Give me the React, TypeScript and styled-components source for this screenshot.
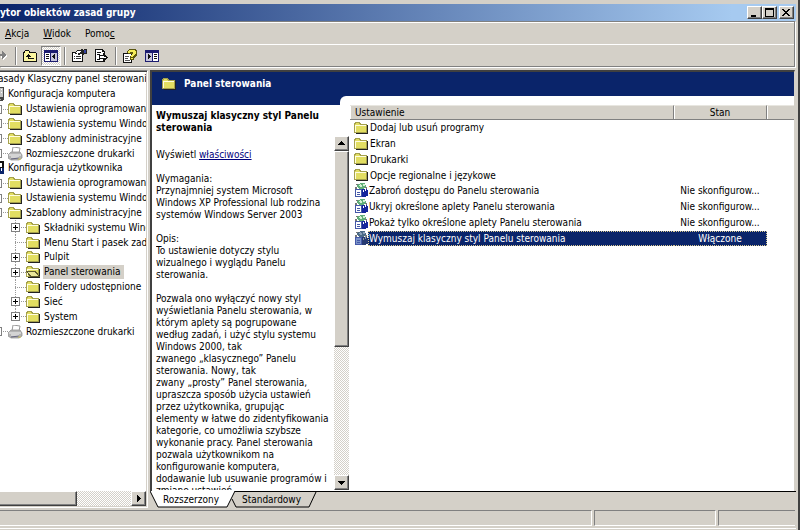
import React from "react";
import styled, { createGlobalStyle, css } from "styled-components";

const FACE = "#d4d0c8";
const NAVY = "#0a246a";
const SHADOW = "#808080";
const DARK = "#404040";

const GlobalStyle = createGlobalStyle`
  * { box-sizing: border-box; }
  body { margin: 0; background: ${FACE}; }
  body, button { font-family: "DejaVu Sans Condensed", "DejaVu Sans", sans-serif; font-size: 10px; line-height: 12px; color: #000; }
  button { padding: 0; border: 0; background: none; }
  svg { display: block; flex: none; }
`;

const raised = css`
  background: ${FACE};
  border: 1px solid;
  border-color: #fff ${DARK} ${DARK} #fff;
  box-shadow: inset -1px -1px ${SHADOW};
`;

const Window = styled.main`
  display: flex;
  flex-direction: column;
  height: 100vh;
  overflow: hidden;
  padding: 4px 2px 0 0;
  background: ${FACE};
  border-right: 2px solid ${DARK};
  white-space: nowrap;
`;

const TitleBar = styled.header`
  display: flex;
  align-items: center;
  height: 17px;
  flex: none;
  padding-right: 2px;
  background: linear-gradient(90deg, ${NAVY}, #a6caf0 92%);
`;

const Title = styled.h1`
  flex: 1;
  margin: 0;
  font-size: 10px;
  line-height: 17px;
  color: #fff;
`;

const CaptionButton = styled.button<{ $apart?: boolean }>`
  ${raised}
  display: grid;
  place-items: center;
  width: 15px;
  height: 13px;
  margin-left: ${(p) => (p.$apart ? 2 : 0)}px;
`;

const Bars = styled.div`
  flex: none;
  border-top: 1px solid ${SHADOW};
  border-right: 1px solid ${SHADOW};
  border-bottom: 1px solid ${SHADOW};
  box-shadow: inset 0 1px #fff, 1px 1px #fff;
  margin: 0 1px 3px 0;
`;

const MenuBar = styled.nav`
  display: flex;
  align-items: center;
  gap: 14px;
  height: 23px;
  padding: 1px 0 0 5px;
  border-bottom: 1px solid #fff;
`;

const Toolbar = styled.div`
  display: flex;
  align-items: center;
  height: 21px;
`;

const ToolButton = styled.button<{ $pressed?: boolean; $narrow?: boolean }>`
  display: grid;
  place-items: center;
  justify-content: ${(p) => (p.$narrow ? "start" : "center")};
  width: ${(p) => (p.$narrow ? 12 : 22)}px;
  height: 20px;
  ${(p) =>
    p.$pressed &&
    css`
      width: 20px;
      background: repeating-conic-gradient(#fff 0 25%, ${FACE} 0 50%) 0 0 / 2px 2px;
      border: 1px solid;
      border-color: ${SHADOW} #fff #fff ${SHADOW};
    `}
`;

const ToolSeparator = styled.span`
  width: 2px;
  height: 18px;
  margin: 0 2px 0 3px;
  border-left: 1px solid ${SHADOW};
  border-right: 1px solid #fff;
`;

const Panes = styled.div`
  display: flex;
  flex: 1;
  min-height: 0;
  gap: 2px;
`;

const TreePane = styled.nav`
  display: flex;
  flex-direction: column;
  width: 148px;
  flex: none;
  overflow: hidden;
  border-top: 1px solid ${SHADOW};
  border-right: 1px solid #fff;
  border-bottom: 1px solid #fff;
  box-shadow: inset 0 1px ${DARK}, inset -1px -1px ${FACE};
  padding: 1px 1px 1px 0;
  background: #fff;
`;

const Tree = styled.ul`
  display: grid;
  grid-template-rows: repeat(18, 1fr);
  height: 267px;
  margin: 0;
  padding: 0;
  overflow: hidden;
  list-style: none;
`;

const TreeRow = styled.li<{ $level: number }>`
  display: flex;
  align-items: center;
  min-height: 0;
  margin-left: ${(p) => (p.$level === 0 ? -2 : p.$level * 18 - 43)}px;
`;

const Branch = styled.span<{ $last?: boolean; $line: boolean }>`
  display: flex;
  align-items: center;
  flex: none;
  align-self: stretch;
  width: 15px;
  background-repeat: no-repeat;
  background-image: ${(p) =>
    p.$line
      ? `repeating-linear-gradient(90deg, #999 0 1px, transparent 1px 2px), repeating-linear-gradient(#999 0 1px, transparent 1px 2px)`
      : "none"};
  background-size: 11px 1px, 1px ${(p) => (p.$last ? "50%" : "100%")};
  background-position: 4px 50%, 4px 0;
`;

const Expander = styled.button`
  width: 9px;
  height: 9px;
  border: 1px solid ${SHADOW};
  background: #fff;
`;

const NodeLabel = styled.span<{ $selected?: boolean }>`
  padding: 0 4px 0 1px;
  margin-left: 2px;
  line-height: 14px;
  background: ${(p) => (p.$selected ? FACE : "transparent")};
`;

const HScroll = styled.div`
  display: flex;
  height: 15px;
  margin-top: auto;
  background: repeating-conic-gradient(#fff 0 25%, ${FACE} 0 50%) 0 0 / 2px 2px;
`;

const HThumb = styled.div`
  ${raised}
  width: 77px;
  border-left: 0;
  margin-right: auto;
`;

const ScrollButton = styled.button`
  ${raised}
  display: grid;
  place-items: center;
  width: 15px;
  height: 15px;
  flex: none;
`;

const ResultPane = styled.section`
  display: flex;
  flex-direction: column;
  flex: 1;
  min-width: 0;
`;

const Result = styled.div`
  display: flex;
  flex-direction: column;
  flex: 1;
  min-height: 0;
  margin-right: 1px;
  padding: 0 0 1px 0;
  background: #fff;
  border-top: 2px solid ${DARK};
  border-left: 2px solid ${DARK};
  border-right: 1px solid ${FACE};
`;

const Banner = styled.div`
  display: flex;
  flex-direction: column;
  flex: none;
  background: ${NAVY};
`;

const BannerTitle = styled.h2`
  display: flex;
  align-items: center;
  gap: 7px;
  height: 24px;
  margin: 0;
  padding-left: 10px;
  font-size: 10px;
  line-height: 12px;
  color: #fff;
`;

const Shoulder = styled.div`
  height: 9px;
  margin-left: 188px;
  background: #fff;
  border-top-left-radius: 6px;
`;

const Split = styled.div`
  display: flex;
  flex: 1;
  min-height: 0;
`;

const Details = styled.article`
  display: flex;
  flex-direction: column;
  width: 198px;
  flex: none;
  padding: 5px 1px 0 4px;
`;

const DetailsTitle = styled.h3`
  margin: 0 0 2px;
  font-size: 10px;
  line-height: 12px;
`;

const DetailsBody = styled.div`
  display: flex;
  flex: 1;
  min-height: 0;
  justify-content: space-between;
`;

const DetailsText = styled.div`
  flex: 1;
  width: 0;
  overflow: hidden;
  padding-top: 13px;
`;

const Paragraph = styled.p`
  margin: 0 0 12px;
  white-space: pre;
`;

const PropertiesLink = styled.a`
  color: #00007c;
`;

const VScroll = styled.div`
  display: flex;
  flex-direction: column;
  width: 15px;
  flex: none;
  background: repeating-conic-gradient(#fff 0 25%, ${FACE} 0 50%) 0 0 / 2px 2px;
`;

const VThumb = styled.div`
  ${raised}
  height: 196px;
  margin-bottom: auto;
`;

const ListArea = styled.div`
  flex: 1;
  min-width: 0;
`;

const List = styled.table`
  width: 100%;
  height: 141px;
  table-layout: fixed;
  border-collapse: separate;
  border-spacing: 0;
`;

const Column = styled.col<{ $width?: number }>`
  width: ${(p) => (p.$width ? `${p.$width}px` : "auto")};
`;

const HeaderCell = styled.th<{ $center?: boolean }>`
  height: 15px;
  padding: 0 5px;
  font-weight: 400;
  text-align: ${(p) => (p.$center ? "center" : "left")};
  background: ${FACE};
  border-top: 1px solid #e8e6e0;
  border-bottom: 1px solid ${SHADOW};
  border-right: 1px solid ${SHADOW};
  box-shadow: inset 1px 0 #fff;
  &:last-child { border-right: 0; }
`;

const selectedFill = css`
  color: #fff;
  background: ${NAVY};
  border-color: #d8c890;
`;

const NameCell = styled.td`
  padding: 0 0 0 4px;
`;

const NameBox = styled.div`
  display: flex;
  align-items: center;
`;

const Name = styled.span<{ $selected?: boolean }>`
  flex: 1;
  line-height: 13px;
  border: 1px dotted transparent;
  border-right: 0;
  ${(p) => p.$selected && selectedFill}
`;

const StateText = styled.div<{ $selected?: boolean }>`
  text-align: center;
  line-height: 13px;
  border: 1px dotted transparent;
  border-left: 0;
  ${(p) => p.$selected && selectedFill}
`;

const StateCell = styled.td`
  padding: 0;
`;

const TabStrip = styled.div`
  display: flex;
  height: 17px;
  flex: none;
  border-top: 1px solid #000;
`;

const Tab = styled.button<{ $second?: boolean }>`
  position: relative;
  height: 16px;
  width: ${(p) => (p.$second ? 87 : 86)}px;
  margin-left: ${(p) => (p.$second ? -6 : 0)}px;
  padding-right: 4px;
  z-index: ${(p) => (p.$second ? 0 : 1)};
`;

const TabShape = styled.svg`
  position: absolute;
  left: 0;
  bottom: 0;
`;

const TabText = styled.span`
  position: relative;
`;

const StatusBar = styled.footer`
  display: flex;
  gap: 2px;
  height: 16px;
  flex: none;
  margin: 2px 1px 2px 0;
`;

const StatusCell = styled.div<{ $width?: number }>`
  flex: ${(p) => (p.$width ? `0 0 ${p.$width}px` : "1")};
  border: 1px solid;
  border-color: ${SHADOW} #fff #fff ${SHADOW};
  &:first-child { border-left: 0; }
  &:last-child { border-right: 0; }
`;

const BottomEdge = styled.div`
  height: 2px;
  flex: none;
  background: ${FACE};
  border-top: 1px solid #fff;
`;

const Folder = ({ open }: { open?: boolean }) => (
  <svg width="15" height="14" viewBox="0 0 15 14" shapeRendering="crispEdges" aria-hidden="true">
    <path d="M2 13h12V4h-1v8H2z" fill="#222" />
    <path d="M0 3l1-2h5l1 2h6v9H0z" fill="#a5a14c" />
    <path d="M1 3l1-1h3l1 2h6v7H1z" fill="#e2de62" />
    <path d="M1 4h11v1H1zM1 4h1v7H1z" fill="#fffde0" />
    {open && (
      <>
        <path d="M0 6h10l4 6H4z" fill="#5f5c30" />
        <path d="M2 7h7l3 4H5z" fill="#e8e59a" />
      </>
    )}
  </svg>
);

const Printer = () => (
  <svg width="15" height="14" viewBox="0 0 15 14" aria-hidden="true">
    <path d="M5 0l7 1-1 5H4z" fill="#fff" stroke="#9a9a9a" />
    <path d="M0 8l3-3h9l2 3v3l-3 2H3l-3-2z" fill="#b4b4b4" stroke="#8a8a8a" strokeWidth=".7" />
    <path d="M1 8h12M3 10h8" stroke="#f4f4f4" />
    <path d="M3 12l8-1" stroke="#686880" />
    <path d="M10 12h3" stroke="#c9bd58" />
  </svg>
);

const Computer = () => (
  <svg width="15" height="14" viewBox="0 0 15 14" shapeRendering="crispEdges" aria-hidden="true">
    <path d="M9 0h4l1 1v11l-2 2H2v-3h7z" fill="#444" />
    <path d="M2 1h8v8H2zM10 1h3v9h-3z" fill="#c4c4c4" />
    <path d="M11 2h1v1h-1zM11 5h1v1h-1z" fill="#fff" />
    <path d="M3 12h8v1H3z" fill="#aaa" />
  </svg>
);

const User = () => (
  <svg width="15" height="14" viewBox="0 0 15 14" shapeRendering="crispEdges" aria-hidden="true">
    <path d="M3 0h11v7H3z" fill="#111" />
    <path d="M8 2h4v4H8zM11 7h2v3h-2z" fill="#fff" />
    <path d="M9 7h5v6H9z" fill="#0a246a" />
    <path d="M11 7h1v3h-1z" fill="#fff" />
  </svg>
);

const Policy = ({ selected }: { selected?: boolean }) => (
  <svg width="14" height="15" viewBox="0 0 14 15" shapeRendering="crispEdges" aria-hidden="true">
    <path d="M1 6h7v8H1z" fill={selected ? "#7c94c8" : "#fff"} />
    <path d="M1 6h7v1H2v7H1zM7 7h1v7H2v-1h5zM3 9h3v1H3zM3 11h3v1H3z" fill="#4458a8" />
    <path d="M4 1l3-1h4l1 3-2 3H6L3 4z" fill={selected ? "#4a6a86" : "#5fae78"} />
    <path d="M6 1l2 2-1 2-2-2zM9 1h2v2H9z" fill={selected ? "#8ba0b8" : "#d5f0d4"} />
    <path d="M2 1h2v1H2zM11 4h2v2h-2zM1 4h2v2H1z" fill="#777" />
    <path d="M8 6h5v1h1v6h-2v1H8z" fill={selected ? "#263a72" : "#16269c"} />
    <path d="M9 7h1v2H9zM11 5h1v3h-1z" fill={selected ? "#899" : "#fff"} />
  </svg>
);

const Triangle = ({ dir }: { dir: "up" | "down" | "right" }) => (
  <svg width="7" height="7" viewBox="0 0 7 7" shapeRendering="crispEdges" aria-hidden="true">
    <path
      d={
        dir === "up"
          ? "M3 1h1v1h1v1h1v1h1v1H0V4h1V3h1V2h1z"
          : dir === "down"
            ? "M0 2h7v1H6v1H5v1H4v1H3V5H2V4H1V3H0z"
            : "M2 0h1v1h1v1h1v1h1v1H5v1H4v1H3v1H2z"
      }
    />
  </svg>
);

const Plus = () => (
  <svg width="7" height="7" viewBox="0 0 7 7" shapeRendering="crispEdges" aria-hidden="true">
    <path d="M1 3h5v1H1zM3 1h1v5H3z" />
  </svg>
);

const ForwardIcon = () => (
  <svg width="7" height="11" viewBox="0 0 7 11" shapeRendering="crispEdges" aria-hidden="true">
    <path d="M1 5h2V2h1v1h1v1h1v1h1v2H6v1H5v1H4v1H3V8H1z" fill="#fff" />
    <path d="M0 4h2V1h1v1h1v1h1v1h1v2H5v1H4v1H3v1H2V6H0z" fill="#808080" />
  </svg>
);

const UpFolderIcon = () => (
  <svg width="14" height="12" viewBox="0 0 14 12" shapeRendering="crispEdges" aria-hidden="true">
    <path d="M0 2h1V1h1V0h4v1h1v1h6v1h1v9H0z" fill="#111" />
    <path d="M1 3h1V1h4v2h7v8H1z" fill="#fbf6a0" />
    <path d="M5 4h1v1h1v1h1v1H6v1h5v1H5V7H3V6h1V5h1z" fill="#111" />
  </svg>
);

const PaneIcon = ({ flip }: { flip?: boolean }) => (
  <svg width="14" height="12" viewBox="0 0 14 12" shapeRendering="crispEdges" aria-hidden="true">
    <path d="M0 0h14v12H0z" fill="#1c1c70" />
    <path d={flip ? "M8 3h5v8H8z" : "M1 3h5v8H1z"} fill="#fff" />
    <path d={flip ? "M1 3h6v8H1z" : "M7 3h6v8H7z"} fill="#c8c6dc" />
    {flip ? (
      <path d="M3 4h1v1h1v1h1v1H5v1H4v1H3zM9 4h3v1H9zM9 6h3v1H9zM9 8h3v1H9z" fill="#111" />
    ) : (
      <path d="M2 4h3v1H2zM2 6h3v1H2zM2 8h3v1H2zM10 4h1v5h-1V8H9V7H8V6h1V5h1z" fill="#111" />
    )}
  </svg>
);

const PropertiesIcon = () => (
  <svg width="15" height="13" viewBox="0 0 15 13" shapeRendering="crispEdges" aria-hidden="true">
    <path d="M0 3h11v10H0z" fill="#111" />
    <path d="M1 4h9v8H1z" fill="#fff" />
    <path d="M2 7h1v1H2zM4 7h5v1H4zM2 9h1v1H2zM4 9h5v1H4z" fill="#333" />
    <path d="M2 4l3-3h4V0h2v1h1V0h3v5h-3l-1 1-2-1-3 1-1-1H3z" fill="#222" />
    <path d="M5 2h4v1H8v1H6v1H5V4H4z" fill="#fff" />
    <path d="M12 1h2v3h-2z" fill="#36429c" />
  </svg>
);

const ExportIcon = () => (
  <svg width="13" height="13" viewBox="0 0 13 13" shapeRendering="crispEdges" aria-hidden="true">
    <path d="M0 0h8v1h1v1h1v11H0z" fill="#111" />
    <path d="M1 1h6v2h2v9H1z" fill="#fff" />
    <path d="M2 3h4v1H2zM2 5h3v1H2zM2 10h3v1H2z" fill="#111" />
    <path d="M4 6h4V4h1v1h1v1h1v1h1v1h1v1h-1v1h-1v1h-1v1H8v-2H4z" fill="#111" />
    <path d="M5 7h4v1h2v1H5z" fill="#fff" />
  </svg>
);

const HelpIcon = () => (
  <svg width="14" height="14" viewBox="0 0 14 14" shapeRendering="crispEdges" aria-hidden="true">
    <path d="M0 4h9v10H0z" fill="#111" />
    <path d="M1 5h7v8H1z" fill="#fff" />
    <path d="M2 7h4v1H2zM2 9h3v1H2zM2 11h5v1H2z" fill="#555" />
    <path d="M4 2l2-2h6l2 2v4l-3 3v2H7V7l2-2H5z" fill="#5a5610" />
    <path d="M5 2l1-1h5l2 2v2l-3 2v1H8V6l2-2V3H7v1H5zM8 9h2v1H8z" fill="#f4ed5a" />
  </svg>
);

type Node = {
  level: number;
  label: string;
  icon?: "folder" | "open" | "printer" | "computer" | "user";
  toggle?: boolean;
  selected?: boolean;
  last?: boolean;
};

const nodes: Node[] = [
  { level: 0, label: "asady Klasyczny panel sterowania" },
  { level: 1, label: "Konfiguracja komputera", icon: "computer" },
  { level: 2, label: "Ustawienia oprogramowania", icon: "folder", toggle: true },
  { level: 2, label: "Ustawienia systemu Windows", icon: "folder", toggle: true },
  { level: 2, label: "Szablony administracyjne", icon: "folder", toggle: true },
  { level: 2, label: "Rozmieszczone drukarki", icon: "printer", toggle: true },
  { level: 1, label: "Konfiguracja użytkownika", icon: "user" },
  { level: 2, label: "Ustawienia oprogramowania", icon: "folder", toggle: true },
  { level: 2, label: "Ustawienia systemu Windows", icon: "folder", toggle: true },
  { level: 2, label: "Szablony administracyjne", icon: "folder", toggle: true },
  { level: 3, label: "Składniki systemu Windows", icon: "folder", toggle: true },
  { level: 3, label: "Menu Start i pasek zadań", icon: "folder" },
  { level: 3, label: "Pulpit", icon: "folder", toggle: true },
  { level: 3, label: "Panel sterowania", icon: "open", toggle: true, selected: true },
  { level: 3, label: "Foldery udostępnione", icon: "folder" },
  { level: 3, label: "Sieć", icon: "folder", toggle: true },
  { level: 3, label: "System", icon: "folder", toggle: true, last: true },
  { level: 2, label: "Rozmieszczone drukarki", icon: "printer", toggle: true },
];

const NodeIcon = ({ icon }: { icon: Node["icon"] }) => {
  if (icon === "printer") return <Printer />;
  if (icon === "computer") return <Computer />;
  if (icon === "user") return <User />;
  return <Folder open={icon === "open"} />;
};

const settings: { name: string; state?: string; selected?: boolean }[] = [
  { name: "Dodaj lub usuń programy" },
  { name: "Ekran" },
  { name: "Drukarki" },
  { name: "Opcje regionalne i językowe" },
  { name: "Zabroń dostępu do Panelu sterowania", state: "Nie skonfigurow..." },
  { name: "Ukryj określone aplety Panelu sterowania", state: "Nie skonfigurow..." },
  { name: "Pokaż tylko określone aplety Panelu sterowania", state: "Nie skonfigurow..." },
  { name: "Wymuszaj klasyczny styl Panelu sterowania", state: "Włączone", selected: true },
];

const requirements = `Wymagania:
Przynajmniej system Microsoft
Windows XP Professional lub rodzina
systemów Windows Server 2003`;

const summary = `Opis:
To ustawienie dotyczy stylu
wizualnego i wyglądu Panelu
sterowania.`;

const explanation = `Pozwala ono wyłączyć nowy styl
wyświetlania Panelu sterowania, w
którym aplety są pogrupowane
według zadań, i użyć stylu systemu
Windows 2000, tak
zwanego „klasycznego” Panelu
sterowania. Nowy, tak
zwany „prosty” Panel sterowania,
upraszcza sposób użycia ustawień
przez użytkownika, grupując
elementy w łatwe do zidentyfikowania
kategorie, co umożliwia szybsze
wykonanie pracy. Panel sterowania
pozwala użytkownikom na
konfigurowanie komputera,
dodawanie lub usuwanie programów i
zmianę ustawień.`;

export default function App() {
  return (
    <Window>
      <GlobalStyle />
      <TitleBar>
        <Title>ytor obiektów zasad grupy</Title>
        <CaptionButton aria-label="Minimalizuj">
          <svg width="9" height="9" shapeRendering="crispEdges"><path d="M1 7h5v2H1z" /></svg>
        </CaptionButton>
        <CaptionButton aria-label="Maksymalizuj">
          <svg width="9" height="9" shapeRendering="crispEdges"><path d="M0 0h9v9H0zM1 2v6h7V2z" fillRule="evenodd" /></svg>
        </CaptionButton>
        <CaptionButton aria-label="Zamknij" $apart>
          <svg width="9" height="9" shapeRendering="crispEdges">
            <path d="M0 1h2v1h1v1h2V2h1V1h2v1H7v1H6v1H5v1h1v1h1v1h1v1H6V7H5V6H3v1H2v1H0V7h1V6h1V5h1V4H2V3H1V2H0z" />
          </svg>
        </CaptionButton>
      </TitleBar>

      <Bars>
        <MenuBar>
          <button><u>A</u>kcja</button>
          <button><u>W</u>idok</button>
          <button>Pomo<u>c</u></button>
        </MenuBar>
        <Toolbar>
          <ToolButton aria-label="Dalej" $narrow><ForwardIcon /></ToolButton>
          <ToolSeparator />
          <ToolButton aria-label="W górę"><UpFolderIcon /></ToolButton>
          <ToolButton aria-label="Pokaż drzewo" $pressed><PaneIcon /></ToolButton>
          <ToolSeparator />
          <ToolButton aria-label="Właściwości"><PropertiesIcon /></ToolButton>
          <ToolButton aria-label="Eksportuj listę"><ExportIcon /></ToolButton>
          <ToolSeparator />
          <ToolButton aria-label="Pomoc"><HelpIcon /></ToolButton>
          <ToolButton aria-label="Okienko akcji"><PaneIcon flip /></ToolButton>
        </Toolbar>
      </Bars>

      <Panes>
        <TreePane>
          <Tree>
            {nodes.map((n, i) => (
              <TreeRow key={i} $level={n.level}>
                {n.level > 0 && (
                  <>
                    <Branch $line={n.level > 1} $last={n.last}>
                      {n.toggle && (
                        <Expander aria-label={`Rozwiń ${n.label}`}>{n.level === 3 && <Plus />}</Expander>
                      )}
                    </Branch>
                    <NodeIcon icon={n.icon} />
                  </>
                )}
                {n.level === 0 ? n.label : <NodeLabel $selected={n.selected}>{n.label}</NodeLabel>}
              </TreeRow>
            ))}
          </Tree>
          <HScroll>
            <HThumb />
            <ScrollButton aria-label="Przewiń w prawo"><Triangle dir="right" /></ScrollButton>
          </HScroll>
        </TreePane>

        <ResultPane>
          <Result>
            <Banner>
              <BannerTitle><Folder />Panel sterowania</BannerTitle>
              <Shoulder />
            </Banner>
            <Split>
              <Details>
                <DetailsTitle>Wymuszaj klasyczny styl Panelu<br />sterowania</DetailsTitle>
                <DetailsBody>
                  <DetailsText>
                    <Paragraph>Wyświetl <PropertiesLink href="#properties">właściwości</PropertiesLink></Paragraph>
                    <Paragraph>{requirements}</Paragraph>
                    <Paragraph>{summary}</Paragraph>
                    <Paragraph>{explanation}</Paragraph>
                  </DetailsText>
                  <VScroll>
                    <ScrollButton aria-label="Przewiń w górę"><Triangle dir="up" /></ScrollButton>
                    <VThumb />
                    <ScrollButton aria-label="Przewiń w dół"><Triangle dir="down" /></ScrollButton>
                  </VScroll>
                </DetailsBody>
              </Details>
              <ListArea>
                <List>
                  <colgroup>
                    <Column />
                    <Column $width={93} />
                    <Column $width={27} />
                  </colgroup>
                  <thead>
                    <tr>
                      <HeaderCell>Ustawienie</HeaderCell>
                      <HeaderCell $center>Stan</HeaderCell>
                      <HeaderCell />
                    </tr>
                  </thead>
                  <tbody>
                    {settings.map((s) => (
                      <tr key={s.name}>
                        <NameCell>
                          <NameBox>
                            {s.state ? <Policy selected={s.selected} /> : <Folder />}
                            <Name $selected={s.selected}>{s.name}</Name>
                          </NameBox>
                        </NameCell>
                        <StateCell>
                          <StateText $selected={s.selected}>{s.state}</StateText>
                        </StateCell>
                        <td />
                      </tr>
                    ))}
                  </tbody>
                </List>
              </ListArea>
            </Split>
          </Result>
          <TabStrip>
            <Tab>
              <TabShape width="86" height="17" viewBox="0 0 86 17">
                <path d="M0 0L8 16H77L85 0z" fill="#fff" />
                <path d="M0 0L8 16H77L85 0" fill="none" stroke="#000" />
              </TabShape>
              <TabText>Rozszerzony</TabText>
            </Tab>
            <Tab $second>
              <TabShape width="87" height="16" viewBox="0 0 87 16">
                <path d="M2 7L6 15H79L86 0" fill="none" stroke="#000" />
              </TabShape>
              <TabText>Standardowy</TabText>
            </Tab>
          </TabStrip>
        </ResultPane>
      </Panes>

      <StatusBar>
        <StatusCell />
        <StatusCell $width={122} />
        <StatusCell $width={77} />
      </StatusBar>
      <BottomEdge />
    </Window>
  );
}
